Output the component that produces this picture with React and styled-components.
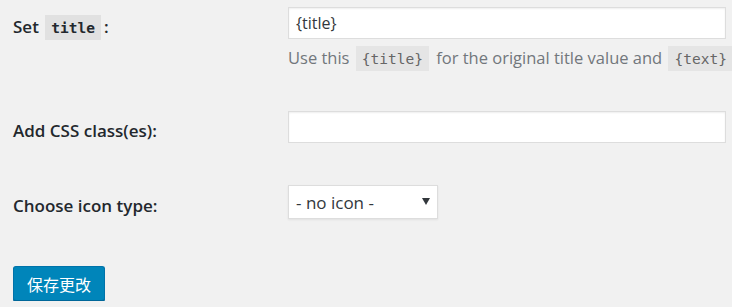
import React from 'react'
import styled, { createGlobalStyle } from 'styled-components'

const Global = createGlobalStyle`
body {
  margin: 0;
  background: #f1f1f1;
  font-family: "Open Sans", "Noto Sans CJK SC", sans-serif;
  font-size: 16.5px;
  color: #23282d;
}
`;

const Page = styled.form`
padding: 7px 0 0 13px;
`;

const Row = styled.div`
display: grid;
grid-template-columns: 275px 438px;
padding-bottom: ${props => props.gap || 40}px;
`;

const Label = styled.label`
display: block;
padding-top: ${props => props.top || 11}px;
font-size: 17px;
font-weight: 600;
line-height: 20px;
`;

const Code = styled.code`
display: inline-block;
font-family: "DejaVu Sans Mono", monospace;
font-size: 14.5px;
background: ${props => props.light ? "#e5e5e5" : "#e1e1e1"};
color: ${props => props.light ? "#666" : "#23282d"};
font-weight: ${props => props.light ? "400" : "700"};
padding: 3px 6px 2px;
margin: 0 3px 0 2px;
line-height: 20px;
`;

const Field = styled.div``;

const TextInput = styled.input`
box-sizing: border-box;
width: 100%;
height: 32px;
border: 1px solid #ddd;
background: #fff;
box-shadow: inset 0 1px 2px rgba(0,0,0,.07);
font: inherit;
font-size: 16px;
color: #32373c;
padding: 0 7px;
outline: none;
`;

const Description = styled.p`
margin: 6px 0 0;
color: #72777c;
white-space: nowrap;
line-height: 26px;
`;

const SelectWrap = styled.div`
position: relative;
width: 150px;
margin-top: 2px;
`;

const Select = styled.select`
appearance: none;
box-sizing: border-box;
width: 150px;
height: 34px;
border: 1px solid #ddd;
background: #fff;
box-shadow: 0 1px 2px rgba(0,0,0,.07);
font: inherit;
font-size: 17px;
color: #32373c;
padding: 0 7px;
border-radius: 0;
`;

const Arrow = styled.span`
position: absolute;
right: 8px;
top: 13px;
width: 0;
height: 0;
border-left: 4px solid transparent;
border-right: 4px solid transparent;
border-top: 7px solid #32373c;
pointer-events: none;
`;

const Submit = styled.p`
margin: 9px 0 0;
`;

const Button = styled.button`
height: 35px;
padding: 0 13px;
background: #0085ba;
border: 1px solid #0073aa;
border-bottom-color: #006799;
box-shadow: 0 1px 0 #006799;
border-radius: 3px;
color: #fff;
font-family: "Noto Sans CJK SC", sans-serif;
font-size: 16px;
cursor: pointer;
`;

const App = () => {
  return (
    <>
      <Global />
      <Page>
        <Row>
          <Label top={8}>Set <Code>title</Code>:</Label>
          <Field>
            <TextInput defaultValue="{title}" />
            <Description>
              Use this <Code light>{'{title}'}</Code> for the original title value and <Code light>{'{text}'}</Code>
            </Description>
          </Field>
        </Row>
        <Row>
          <Label top={10}>Add CSS class(es):</Label>
          <Field>
            <TextInput />
          </Field>
        </Row>
        <Row gap={38}>
          <Label top={13}>Choose icon type:</Label>
          <Field>
            <SelectWrap>
              <Select defaultValue="none">
                <option value="none">- no icon -</option>
              </Select>
              <Arrow />
            </SelectWrap>
          </Field>
        </Row>
        <Submit>
          <Button type="button">保存更改</Button>
        </Submit>
      </Page>
    </>
  )
}

export default App;
